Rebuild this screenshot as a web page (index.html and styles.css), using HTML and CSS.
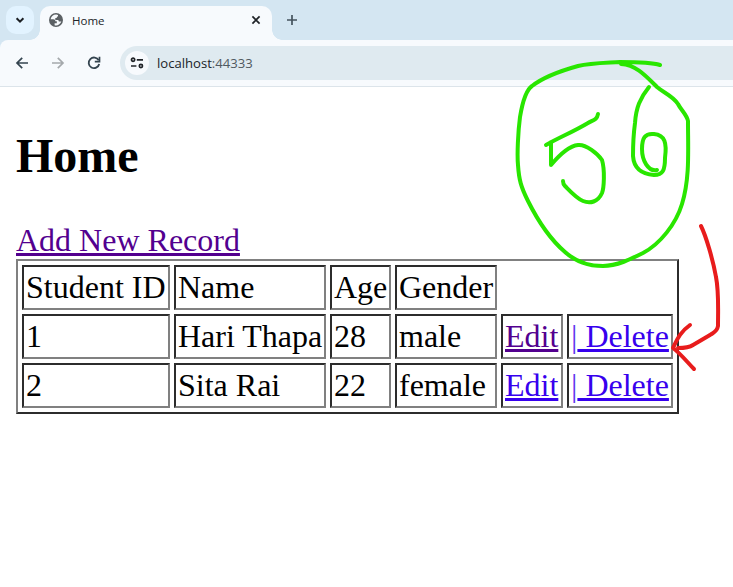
FILE: index.html
```html
<!DOCTYPE html>
<html lang="en">
<head>
<meta charset="utf-8">
<title>Home</title>
<link rel="stylesheet" href="styles.css">
</head>
<body>
<header class="browser">
  <div class="tabs">
    <div class="tab-search"><svg width="28" height="28" viewBox="0 0 28 28"><path d="M10.6 12.3 14 15.7l3.4-3.4" fill="none" stroke="#1b1f23" stroke-width="2"/></svg></div>
    <div class="tab">
      <svg class="globe" width="14" height="14" viewBox="0 0 14 14"><circle cx="7" cy="7" r="7" fill="#5b6064"/><path d="M7.3 1.6C4.5 1.5 2.2 3.3 1.6 6.2h2.6c1.4 0 2.2.8 2.2 2.1h1.4v2H5.6v2c2.7.8 5.8-.8 6.7-3.7h-1.5c-.9 0-1.4-.6-1.4-1.6H6.3V4.900h1.4c0-.8.5-1.3 1.3-1.3V1.9Z" fill="#f7fafd"/></svg>
      <span class="tab-title">Home</span>
      <svg width="10" height="10" viewBox="0 0 10 10"><path d="m1.4 1.4 7.2 7.2m0-7.2L1.4 8.6" stroke="#1f2327" stroke-width="1.7"/></svg>
    </div>
    <svg class="new-tab" width="12" height="12" viewBox="0 0 12 12"><path d="M6 1v10M1 6h10" stroke="#44535e" stroke-width="1.7"/></svg>
  </div>
  <div class="toolbar">
    <svg width="14" height="14" viewBox="0 0 14 14"><path d="M13 7H2m5.2-5.2L2 7l5.2 5.2" fill="none" stroke="#34444f" stroke-width="1.7"/></svg>
    <svg width="14" height="14" viewBox="0 0 14 14"><path d="M1 7h11M6.8 1.8 12 7l-5.2 5.2" fill="none" stroke="#a5a9ac" stroke-width="1.7"/></svg>
    <svg width="14" height="14" viewBox="0 0 14 14"><path d="M11.7 4.3A5.3 5.3 0 1 0 12.2 8" fill="none" stroke="#34444f" stroke-width="1.8"/><path d="M12.5.8v4.8H7.8" fill="none" stroke="#34444f" stroke-width="1.7"/></svg>
    <div class="address">
      <span class="site-info"><svg width="14" height="12" viewBox="0 0 14 12"><g fill="none" stroke="#202428" stroke-width="1.7"><circle cx="3.1" cy="2.8" r="1.6"/><path d="M6.8 2.8H13M1 9h5.4"/><circle cx="10.9" cy="9" r="1.6"/></g></svg></span>
      <span class="url">localhost<span class="port">:44333</span></span>
    </div>
  </div>
</header>
<main>
  <h2>Home</h2>
  <a class="visited" href="#">Add New Record</a>
  <table>
    <colgroup><col class="c-id"><col class="c-name"><col class="c-age"><col class="c-gender"><col class="c-edit"><col class="c-delete"></colgroup>
    <tr><td>Student ID</td><td>Name</td><td>Age</td><td>Gender</td></tr>
    <tr><td>1</td><td>Hari Thapa</td><td>28</td><td>male</td><td><a class="visited" href="#">Edit</a></td><td><span class="bar">|</span><a href="#"> Delete</a></td></tr>
    <tr><td>2</td><td>Sita Rai</td><td>22</td><td>female</td><td><a href="#">Edit</a></td><td><span class="bar">|</span><a href="#"> Delete</a></td></tr>
  </table>
</main>
<svg class="ink" width="733" height="587" viewBox="0 0 733 587">
  <g class="green">
    <path d="M660 65C651 62 637 62 620 62C602 63 590 63 578 66C560 71 541 79 532 86C526 90 522 105 520 117C518 132 517 155 518 165C519 180 521 187 528 201C537 219 551 240 565 252C576 262 590 266 603 266C617 266 631 259 643 253C660 244 676 224 682 204C690 178 688 150 688 121C687 115 681 110 678 104C673 96 664 93 657 87C645 75 636 65 621 64"/>
    <path d="M649 87C640 98 636 108 635 123C633 138 633 148 633 156C634 170 643 174 654 175C663 175 665 170 665 158C667 143 665 135 654 134C645 133 642 138 642 149C642 160 648 172 657 170"/>
    <path d="M598 114C597 120 593 120 588 123C573 132 560 137 546 145M551 142V165C561 153 569 146 578 145C586 144 598 154 602 160C605 170 604 188 602 193C598 202 590 204 583 201C576 198 569 190 565 186Q563 184 563 181"/>
  </g>
  <g class="red">
    <path d="M701 226C706 236 713 260 716 277C719 292 718 309 718 326C717 332 714 332 710 335L693 345C690 347 686 348 678 348"/>
    <path d="M690 325C679 333 677 340 673 348C681 354 687 362 694 369"/>
  </g>
</svg>
</body>
</html>
```
FILE: styles.css
```css
* { box-sizing: border-box; }
body { margin: 0; width: 733px; height: 587px; overflow: hidden; position: relative; background: #fff; color: #000; font: 32px/37px "Liberation Serif", serif; }
svg { display: block; flex: none; }
.browser { height: 87px; background: #d4e6f2; border-bottom: 1px solid #dce4ea; font-family: "Open Sans", sans-serif; }
.tabs { height: 40px; padding: 6px 6px 0; display: flex; }
.tab-search { width: 28px; height: 28px; border-radius: 10px; background: #e2f3ff; }
.tab { position: relative; width: 232px; height: 34px; margin-left: 6px; padding: 0 11px 6px 9px; display: flex; align-items: center; background: #f7fafd; border-radius: 10px 10px 0 0; }
.tab::before, .tab::after { content: ""; position: absolute; bottom: 0; width: 10px; height: 10px; }
.tab::before { left: -10px; background: radial-gradient(circle at 0 0, transparent 9.5px, #f7fafd 10px); }
.tab::after { right: -10px; background: radial-gradient(circle at 100% 0, transparent 9.5px, #f7fafd 10px); }
.tab-title { flex: 1; margin-left: 9px; padding-top: 2px; font-size: 11.5px; line-height: 16px; color: #202428; }
.new-tab { margin: 8px 0 0 14px; }
.toolbar { height: 46px; padding-left: 15px; display: flex; align-items: center; gap: 22px; background: #f7fafd; border-top-left-radius: 8px; }
.address { flex: 1; height: 34px; margin-left: -3px; padding-left: 5px; display: flex; align-items: center; background: #dfeaf0; border-radius: 17px 0 0 17px; }
.site-info { width: 24px; height: 24px; border-radius: 50%; background: #f7fafd; display: grid; place-items: center; }
.url { margin-left: 8px; font-size: 13.1px; line-height: 18px; color: #202428; }
.port { color: #505960; }
main { padding: 41px 16px 0; }
h2 { margin: 0 0 39px; font-size: 48px; line-height: 55px; }
main > a { display: block; width: max-content; }
a { color: #3700ee; text-decoration: underline; text-decoration-thickness: 3px; text-underline-offset: 2px; }
.visited { color: #53008f; }
table { table-layout: fixed; width: 663px; border: 2px solid; border-color: #808080 #2c2c2c #2c2c2c #808080; border-spacing: 4px; }
td { height: 45px; padding: 2px; border: 2px solid; border-color: #2c2c2c #808080 #808080 #2c2c2c; white-space: nowrap; }
.c-id { width: 148px; }
.c-name { width: 152px; }
.c-age { width: 61px; }
.c-gender { width: 102px; }
.c-edit { width: 62px; }
.c-delete { width: 106px; }
.bar { color: #6034ee; }
.ink { position: absolute; inset: 0; pointer-events: none; }
.ink path { fill: none; stroke-width: 4; stroke-linecap: round; stroke-linejoin: round; }
.green { stroke: #29e600; }
.red { stroke: #e81c1c; }
```
